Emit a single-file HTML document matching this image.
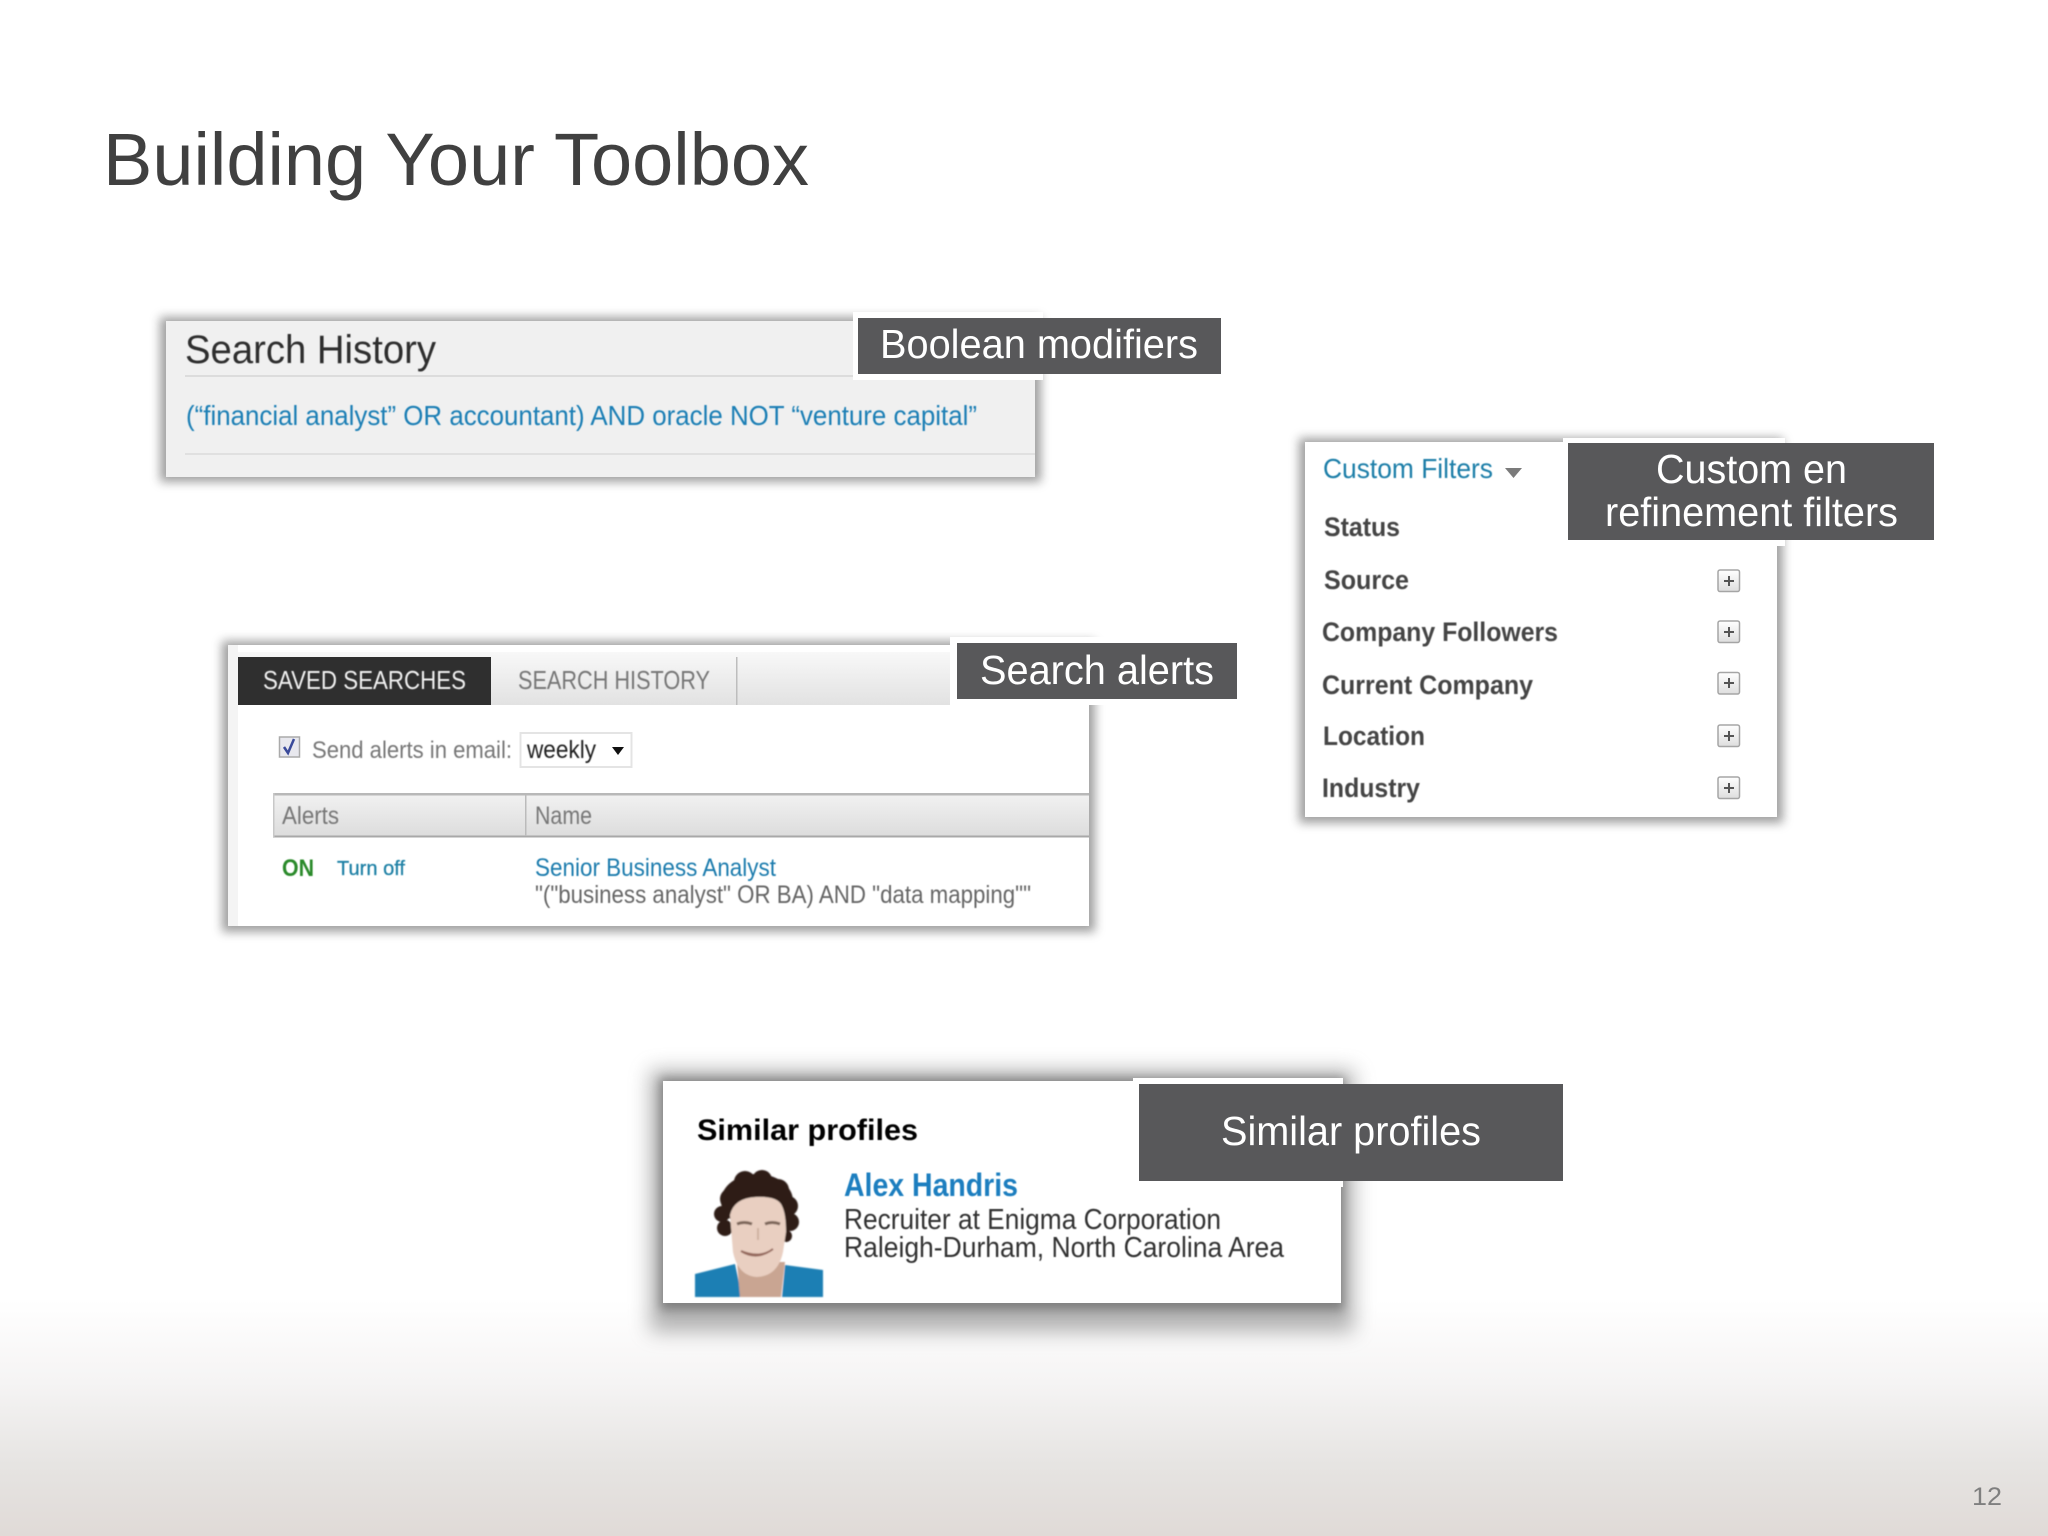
<!DOCTYPE html>
<html><head><meta charset="utf-8"><title>Building Your Toolbox</title>
<style>html,body{margin:0;padding:0;background:#fff}svg{display:block}text{font-family:"Liberation Sans",Arial,sans-serif}</style></head>
<body>
<svg width="2048" height="1536" viewBox="0 0 2048 1536" xmlns="http://www.w3.org/2000/svg">
<defs>
<linearGradient id="bg" x1="0" y1="0" x2="0" y2="1"><stop offset="0" stop-color="#ffffff"/><stop offset=".35" stop-color="#f5f4f4"/><stop offset=".7" stop-color="#e6e4e2"/><stop offset="1" stop-color="#e0dad7"/></linearGradient>
<linearGradient id="hd" x1="0" y1="0" x2="0" y2="1"><stop offset="0" stop-color="#f8f8f8"/><stop offset="1" stop-color="#e2e2e2"/></linearGradient>
<linearGradient id="th" x1="0" y1="0" x2="0" y2="1"><stop offset="0" stop-color="#f2f2f2"/><stop offset="1" stop-color="#dcdcdc"/></linearGradient>
<linearGradient id="pl" x1="0" y1="0" x2="0" y2="1"><stop offset="0" stop-color="#ffffff"/><stop offset="1" stop-color="#dedede"/></linearGradient>
<filter id="s4" x="-10%" y="-20%" width="120%" height="140%"><feGaussianBlur stdDeviation="5"/></filter>
<filter id="s9" x="-10%" y="-20%" width="120%" height="140%"><feGaussianBlur stdDeviation="10"/></filter>
<filter id="t" x="-5%" y="-30%" width="110%" height="160%"><feGaussianBlur stdDeviation="0.5"/></filter>
<filter id="f" x="-10%" y="-10%" width="120%" height="120%"><feGaussianBlur stdDeviation="0.9"/></filter>
</defs>
<rect x="0" y="1300" width="2048" height="236" fill="url(#bg)"/>

<text x="103" y="185" font-size="74" fill="#404040" textLength="706" lengthAdjust="spacingAndGlyphs">Building Your Toolbox</text>
<text x="1972" y="1505" font-size="25" fill="#7f7f7f" textLength="30" lengthAdjust="spacingAndGlyphs">12</text>

<!-- Panel 1 -->
<rect x="160" y="317" width="881" height="165" fill="#777" opacity=".7" filter="url(#s4)"/>
<rect x="166" y="321" width="869" height="156" fill="#f0f0f0"/>
<rect x="185" y="375" width="850" height="2" fill="#dcdcdc"/>
<rect x="185" y="453" width="850" height="2" fill="#e0e0e0"/>
<g filter="url(#t)">
<text x="185" y="363" font-size="40" fill="#2e2e2e" textLength="251" lengthAdjust="spacingAndGlyphs">Search History</text>
<text x="186" y="425" font-size="28" fill="#1a7fb5" textLength="791" lengthAdjust="spacingAndGlyphs">(“financial analyst” OR accountant) AND oracle NOT “venture capital”</text>
</g>
<rect x="853" y="312" width="190" height="68" fill="#fff"/>
<rect x="858" y="318" width="363" height="56" fill="#58585a"/>
<text x="880" y="358" font-size="41" fill="#fff" textLength="318" lengthAdjust="spacingAndGlyphs">Boolean modifiers</text>

<!-- Panel 2 -->
<rect x="222" y="641" width="873" height="291" fill="#777" opacity=".7" filter="url(#s4)"/>
<rect x="228" y="645" width="861" height="281" fill="#fff"/>
<rect x="238" y="652" width="851" height="53" fill="url(#hd)"/>
<rect x="238" y="657" width="253" height="48" fill="#2f2f2f"/>
<rect x="736" y="657" width="1.5" height="48" fill="#bdbdbd"/>
<rect x="228" y="645" width="10" height="281" fill="#f4f4f4"/>
<g filter="url(#t)">
<text x="263" y="689" font-size="26" fill="#f0f0f0" textLength="203" lengthAdjust="spacingAndGlyphs">SAVED SEARCHES</text>
<text x="518" y="689" font-size="26" fill="#777" textLength="192" lengthAdjust="spacingAndGlyphs">SEARCH HISTORY</text>
<text x="312" y="758" font-size="24" fill="#777" textLength="200" lengthAdjust="spacingAndGlyphs">Send alerts in email:</text>
<text x="282" y="876" font-size="24" font-weight="bold" fill="#2a8a2a" textLength="32" lengthAdjust="spacingAndGlyphs">ON</text>
<text x="337" y="875" font-size="20" fill="#1f80a5" stroke="#1f80a5" stroke-width=".3" textLength="68" lengthAdjust="spacingAndGlyphs">Turn off</text>
<text x="535" y="876" font-size="25" fill="#1b7cad" textLength="241" lengthAdjust="spacingAndGlyphs">Senior Business Analyst</text>
<text x="535" y="903" font-size="25" fill="#666" textLength="496" lengthAdjust="spacingAndGlyphs">"("business analyst" OR BA) AND "data mapping""</text>
</g>
<rect x="279.500" y="737" width="20" height="20" fill="#e8e8ee" stroke="#aaa" stroke-width="1.500"/>
<path d="M284 747 L288 753 L294 739" fill="none" stroke="#3a4a9a" stroke-width="2.500"/>
<rect x="520.500" y="733" width="111" height="34" fill="#fff" stroke="#e4e4e4" stroke-width="2"/>
<text x="527" y="758" font-size="25" fill="#222" textLength="69" lengthAdjust="spacingAndGlyphs" filter="url(#t)">weekly</text>
<path d="M612 747 H624 L618 755 Z" fill="#111"/>
<rect x="273" y="793" width="816" height="44" fill="url(#th)"/>
<rect x="273" y="793" width="816" height="2.500" fill="#b8b8b8"/>
<rect x="273" y="835.500" width="816" height="2" fill="#a8a8a8"/>
<rect x="273" y="793" width="1.500" height="44" fill="#c8c8c8"/>
<rect x="525" y="795" width="1.500" height="41" fill="#bbb"/>
<g filter="url(#t)">
<text x="282" y="824" font-size="25" fill="#777" textLength="57" lengthAdjust="spacingAndGlyphs">Alerts</text>
<text x="535" y="824" font-size="25" fill="#777" textLength="57" lengthAdjust="spacingAndGlyphs">Name</text>
</g>
<rect x="950" y="637" width="295" height="68" fill="#fff"/>
<rect x="957" y="643" width="280" height="56" fill="#58585a"/>
<text x="980" y="684" font-size="41" fill="#fff" textLength="234" lengthAdjust="spacingAndGlyphs">Search alerts</text>

<!-- Panel 3 -->
<rect x="1299" y="438" width="484" height="385" fill="#777" opacity=".7" filter="url(#s4)"/>
<rect x="1305" y="442" width="472" height="375" fill="#fff"/>
<g filter="url(#t)">
<text x="1323" y="478" font-size="28" fill="#1a7ea8" textLength="170" lengthAdjust="spacingAndGlyphs">Custom Filters</text>
<g font-size="27" font-weight="bold" fill="#444">
<text x="1324" y="536" textLength="76" lengthAdjust="spacingAndGlyphs">Status</text>
<text x="1324" y="589" textLength="85" lengthAdjust="spacingAndGlyphs">Source</text>
<text x="1322" y="641" textLength="236" lengthAdjust="spacingAndGlyphs">Company Followers</text>
<text x="1322" y="694" textLength="211" lengthAdjust="spacingAndGlyphs">Current Company</text>
<text x="1323" y="745" textLength="102" lengthAdjust="spacingAndGlyphs">Location</text>
<text x="1322" y="797" textLength="98" lengthAdjust="spacingAndGlyphs">Industry</text>
</g>
</g>
<path d="M1505 468 H1522 L1513.500 478 Z" fill="#7b7b7b"/>
<g stroke="#a5a5a5" stroke-width="1.500" fill="url(#pl)">
<rect x="1718" y="570" width="21.500" height="21.500" rx="2"/>
<rect x="1718" y="621" width="21.500" height="21.500" rx="2"/>
<rect x="1718" y="672.500" width="21.500" height="21.500" rx="2"/>
<rect x="1718" y="725" width="21.500" height="21.500" rx="2"/>
<rect x="1718" y="777" width="21.500" height="21.500" rx="2"/>
</g>
<path d="M1724 581 h10 M1729 576 v10 M1724 632 h10 M1729 627 v10 M1724 683 h10 M1729 678 v10 M1724 736 h10 M1729 731 v10 M1724 788 h10 M1729 783 v10" stroke="#555" stroke-width="2" fill="none"/>
<rect x="1563" y="438" width="222" height="108" fill="#fff"/>
<rect x="1568" y="443" width="366" height="97" fill="#58585a"/>
<text x="1656" y="483" font-size="41" fill="#fff" textLength="191" lengthAdjust="spacingAndGlyphs">Custom en</text>
<text x="1605" y="526" font-size="41" fill="#fff" textLength="293" lengthAdjust="spacingAndGlyphs">refinement filters</text>

<!-- Panel 4 -->
<rect x="650" y="1070" width="704" height="262" fill="#777" opacity=".55" filter="url(#s9)"/>
<rect x="660" y="1078" width="684" height="232" fill="#555" opacity=".55" filter="url(#s4)"/>
<rect x="663" y="1081" width="678" height="222" fill="#fff"/>
<g filter="url(#t)">
<text x="697" y="1140" font-size="30" font-weight="bold" fill="#000" textLength="221" lengthAdjust="spacingAndGlyphs">Similar profiles</text>
<text x="844" y="1196" font-size="32" font-weight="bold" fill="#1a7ebf" textLength="174" lengthAdjust="spacingAndGlyphs">Alex Handris</text>
<text x="844" y="1229" font-size="29" fill="#333" textLength="377" lengthAdjust="spacingAndGlyphs">Recruiter at Enigma Corporation</text>
<text x="844" y="1257" font-size="29" fill="#333" textLength="440" lengthAdjust="spacingAndGlyphs">Raleigh-Durham, North Carolina Area</text>
</g>
<!-- photo -->
<g filter="url(#f)">
<path d="M695 1274 L735 1264 L742 1297 H695 Z" fill="#1a7fb4"/>
<path d="M785 1265 L823 1270 V1297 H782 Z" fill="#1a7fb4"/>
<path d="M737 1262 L785 1262 L781 1297 H740 Z" fill="#c9a592"/>
<g fill="#2e1e17">
<ellipse cx="757" cy="1201" rx="36" ry="27"/>
<circle cx="731" cy="1199" r="11"/><circle cx="745" cy="1182" r="11"/><circle cx="762" cy="1180" r="10"/>
<circle cx="778" cy="1190" r="11"/><circle cx="788" cy="1206" r="10"/><circle cx="790" cy="1222" r="9"/>
<circle cx="722" cy="1214" r="8"/><circle cx="725" cy="1228" r="8"/><circle cx="786" cy="1236" r="6"/>
</g>
<path d="M730 1215 Q734 1198 756 1197 Q778 1196 782 1206 Q786 1214 786 1232 L783 1252 Q778 1276 757 1277 Q738 1276 733 1252 Z" fill="#e9cfc1"/>
<path d="M737 1224 q7 -3 15 0 M765 1224 q7 -3 15 0" stroke="#7b6558" stroke-width="3" fill="none"/>
<path d="M741 1251 Q757 1261 773 1249 Q760 1259 741 1251 Z" fill="#fff" stroke="#94685c" stroke-width="2"/>
<path d="M758 1228 v12" stroke="#cdb0a0" stroke-width="2"/>
</g>
<rect x="1133" y="1078" width="210" height="109" fill="#fff"/>
<rect x="1139" y="1084" width="424" height="97" fill="#58585a"/>
<text x="1221" y="1145" font-size="41" fill="#fff" textLength="260" lengthAdjust="spacingAndGlyphs">Similar profiles</text>
</svg>
</body></html>
